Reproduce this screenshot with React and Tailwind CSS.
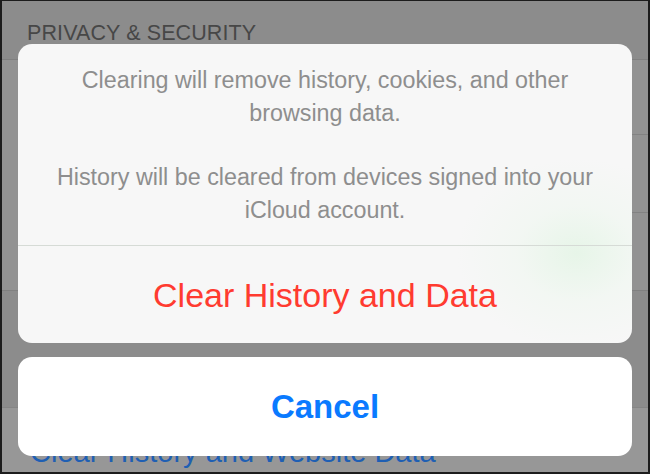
import React from "react";

export default function App() {
  const font = { fontFamily: '"Liberation Sans", Arial, sans-serif' };
  return (
    <div
      className="relative w-[650px] h-[474px] overflow-hidden border-t border-l-2 border-r-2 border-b-2 border-[#1c1c1c] bg-[#8c8c8c]"
      style={font}
    >
      {/* dimmed settings page underneath */}
      <div className="flex flex-col h-full">
        <div className="h-[59px] flex items-start pl-[25px] pt-[21px] border-b border-[#808080]">
          <span className="text-[21.5px] leading-[22px] text-[#474747] tracking-[0.1px]">PRIVACY &amp; SECURITY</span>
        </div>
        <div className="bg-[#929292]">
          <div className="h-[75px] ml-[30px] border-b border-[#828282]" />
          <div className="h-[78px] ml-[30px] border-b border-[#828282]" />
          <div className="h-[78px] border-b border-[#808080]" />
        </div>
        <div className="h-[116px]" />
        <div className="flex-1 bg-[#979797] border-t border-[#858585] pl-[28px] pt-[28px]">
          <span className="text-[29px] leading-[32px] text-[#1f5fb3]">Clear History and Website Data</span>
        </div>
      </div>

      {/* action sheet overlay */}
      <div className="absolute inset-0 flex flex-col px-4 pt-[43px] gap-[14px]">
        <div className="relative h-[299px] rounded-[14px] bg-[#f7f7f7] overflow-hidden flex flex-col">
          <div className="absolute inset-0 bg-[radial-gradient(ellipse_120px_95px_at_91%_70%,rgba(222,244,224,0.65),rgba(234,247,235,0.35)_50%,transparent_100%)]" />
          <div className="relative flex flex-col items-center text-center text-[23.3px] leading-[33px] text-[#8e8e8e] pt-[20px] pb-[18px] h-[202px] border-b border-[#d6dbd6]">
            <p>Clearing will remove history, cookies, and other<br />browsing data.</p>
            <p className="mt-[31px]">History will be cleared from devices signed into your<br />iCloud account.</p>
          </div>
          <div className="relative flex-1 flex items-center justify-center">
            <span className="text-[34px] leading-none text-[#ff3b30]">Clear History and Data</span>
          </div>
        </div>
        <div className="h-[99px] rounded-[14px] bg-white flex items-center justify-center">
          <span className="text-[33px] leading-none font-bold text-[#0a7aff]">Cancel</span>
        </div>
      </div>
    </div>
  );
}
